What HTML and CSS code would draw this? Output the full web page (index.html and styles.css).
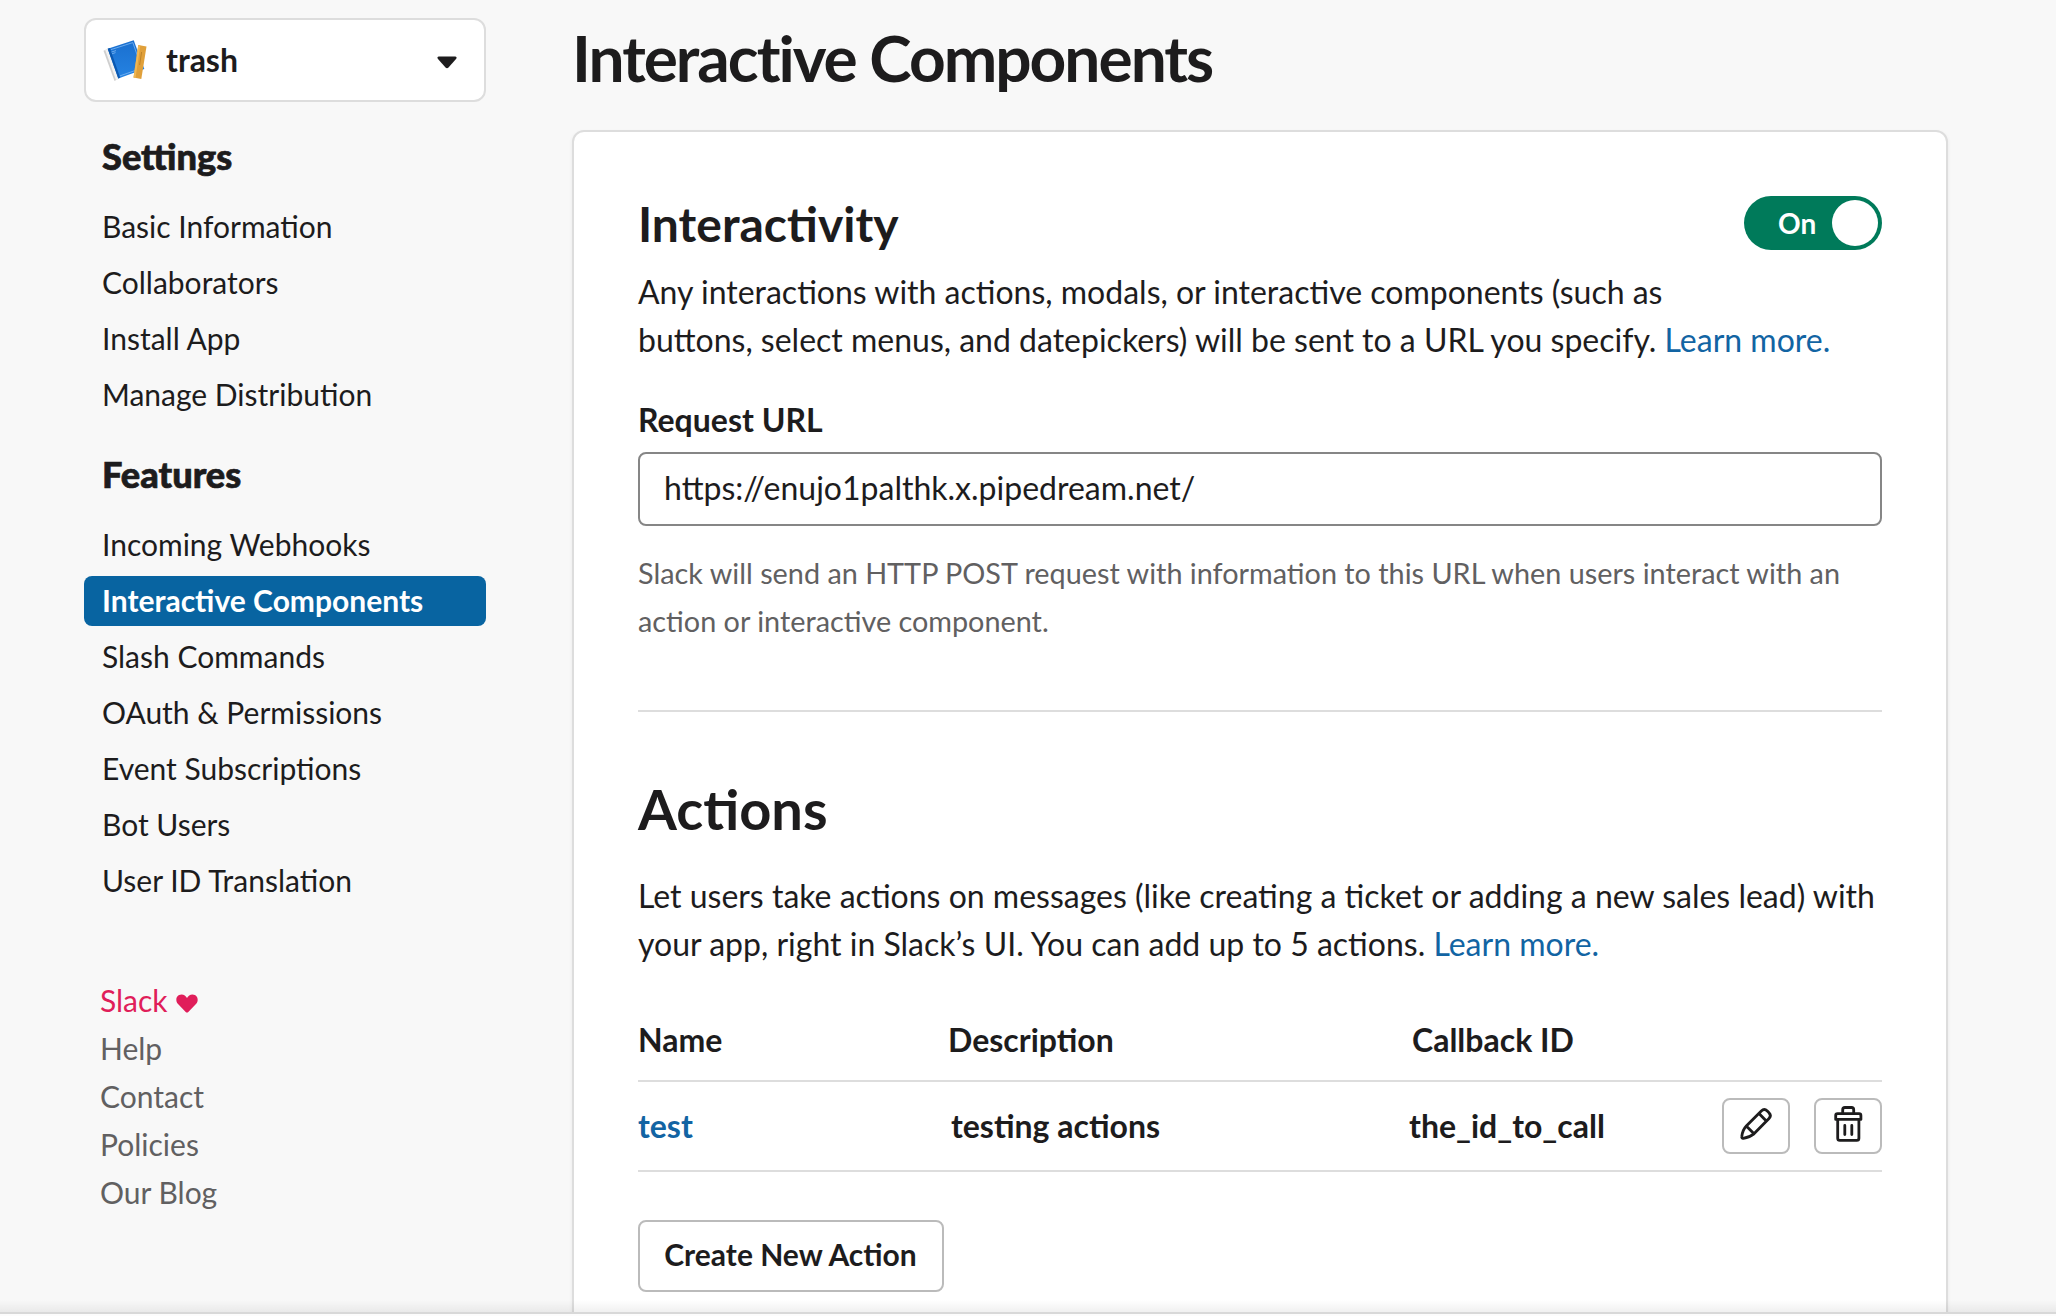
FILE: index.html
```html
<!DOCTYPE html>
<html lang="en">
<head>
<meta charset="utf-8">
<title>Interactive Components</title>
<link rel="stylesheet" href="styles.css">
</head>
<body>
<div class="page">
  <aside class="sidebar">
    <div class="app-picker">
      <svg class="app-icon" viewBox="0 0 44 44" width="44" height="44">
        <defs>
          <linearGradient id="cover" x1="0" y1="0" x2="0" y2="1"><stop offset="0" stop-color="#1a6fcf"/><stop offset="1" stop-color="#2583e2"/></linearGradient>
        </defs>
        <path d="M.5 12.800 5 10.700 15.500 40.700 11.500 43Z" fill="#cfcfcf"/>
        <path d="M2.200 12 5 10.700 15.500 40.700 13 42Z" fill="#f2f2f2"/>
        <path d="M4.700 10.700 30.700 2.300 41.300 31 15.300 40.500Z" fill="url(#cover)"/>
        <path d="M7.800 11.700 29.800 4.600 38.800 30.200 16.600 38" fill="none" stroke="#7db7f3" stroke-width=".8"/>
        <path d="M4.700 10.700 6.900 10 17.200 39.800 15.300 40.500Z" fill="#0b58b0"/>
        <path d="M8.500 14 13 12.600M9 15.800 12.500 14.600" stroke="#8cc0f5" stroke-width=".7"/>
        <path d="M35.300 7 43.500 8.500 38.300 41 30.500 39.500Z" fill="#e0a03a"/>
        <path d="M35.300 7 37.300 7.400 32.500 39.900 30.500 39.500Z" fill="#efb755"/>
        <path d="M38.600 14 36.600 27" stroke="#b27a24" stroke-width=".8"/>
      </svg>
      <span class="app-name">trash</span>
      <svg class="caret" viewBox="0 0 20 13" width="20" height="13"><path d="M1.600 0.500H18.400Q20.500 1.200 19 3L11.500 11.500Q10 13 8.500 11.500L1 3Q-.5 1.200 1.600 .5Z" fill="#1d1c1d"/></svg>
    </div>
    <h4 class="nav-title">Settings</h4>
    <nav class="nav">
      <a class="nav-item">Basic Information</a>
      <a class="nav-item">Collaborators</a>
      <a class="nav-item">Install App</a>
      <a class="nav-item">Manage Distribution</a>
    </nav>
    <h4 class="nav-title">Features</h4>
    <nav class="nav">
      <a class="nav-item">Incoming Webhooks</a>
      <a class="nav-item active">Interactive Components</a>
      <a class="nav-item">Slash Commands</a>
      <a class="nav-item">OAuth &amp; Permissions</a>
      <a class="nav-item">Event Subscriptions</a>
      <a class="nav-item">Bot Users</a>
      <a class="nav-item">User ID Translation</a>
    </nav>
    <div class="links">
      <a class="link-love">Slack <svg class="heart" viewBox="0 0 22 19" width="22" height="19"><path d="M11 18.500Q10.300 18.500 9.700 17.900L1.800 9.800C-.8 6.800-.2 0.500 5.500.4 8 .4 10 2 11 4 12 2 14 .4 16.500.4 22.200.5 22.800 6.800 20.200 9.800L12.300 17.900Q11.700 18.500 11 18.500Z" fill="#e01e5a"/></svg></a>
      <a>Help</a>
      <a>Contact</a>
      <a>Policies</a>
      <a>Our Blog</a>
    </div>
  </aside>
  <main class="main">
    <h1 class="page-title">Interactive Components</h1>
    <section class="card">
      <div class="card-head">
        <h2 class="section-title">Interactivity</h2>
        <div class="toggle"><span class="toggle-label">On</span><span class="knob"></span></div>
      </div>
      <p class="text">Any interactions with actions, modals, or interactive components (such as<br>buttons, select menus, and datepickers) will be sent to a URL you specify. <a class="more">Learn more.</a></p>
      <div class="label">Request URL</div>
      <div class="input">https://enujo1palthk.x.pipedream.net/</div>
      <p class="hint">Slack will send an HTTP POST request with information to this URL when users interact with an<br>action or interactive component.</p>
      <hr class="divider">
      <h2 class="actions-title">Actions</h2>
      <p class="text">Let users take actions on messages (like creating a ticket or adding a new sales lead) with<br>your app, right in Slack’s UI. You can add up to 5 actions. <a class="more">Learn more.</a></p>
      <div class="row row-head"><span>Name</span><span>Description</span><span>Callback ID</span></div>
      <div class="row row-body">
        <a class="more">test</a><span class="cell-desc">testing actions</span><span class="cell-id">the_id_to_call</span>
        <div class="tools">
          <span class="tool"><svg viewBox="0 0 68 56" width="68" height="56" fill="none" stroke="#1d1c1d" stroke-width="2.800" stroke-linejoin="round" stroke-linecap="round"><path d="M19.800 38.500Q20.500 32 24.300 28L39.300 13Q42.300 10 45.300 13L47 14.700Q49.800 17.600 47 20.500L32 35.800Q28 39 21.300 40.300 19.500 40.500 19.800 38.500ZM37 15.500 44.300 23M24.300 28 32 35.800"/></svg></span>
          <span class="tool"><svg viewBox="0 0 68 56" width="68" height="56" fill="none" stroke="#1d1c1d" stroke-width="2.800" stroke-linejoin="round" stroke-linecap="round"><path d="M28.700 15.500V11.700Q28.700 9.500 30.900 9.500H37.500Q39.700 9.500 39.700 11.700V15.500M21.700 21.400V17.400Q21.700 15.600 23.500 15.600H45.100Q46.900 15.600 46.900 17.400V21.400ZM23.700 21.400H44.900V40.200Q44.900 42.300 42.800 42.300H25.800Q23.700 42.300 23.700 40.200ZM30.800 27.400V36.600M37.800 27.400V36.600"/></svg></span>
        </div>
      </div>
      <button class="create">Create New Action</button>
    </section>
  </main>
  <div class="bottom-edge"></div>
</div>
</body>
</html>
```
FILE: styles.css
```css
* { box-sizing: border-box; }
html, body { margin: 0; height: 100%; overflow: hidden; }
body {
  font-family: Lato, "Liberation Sans", sans-serif;
  font-size: 32px;
  line-height: 48px;
  color: #1d1c1d;
  background: #f8f8f8;
}
h1, h2, h4, p { margin: 0; }
.page {
  position: relative;
  display: flex;
  width: 2056px;
  height: 1316px;
  padding: 0 108px 0 84px;
  gap: 86px;
  overflow: hidden;
}
.sidebar { width: 402px; padding-top: 18px; flex: none; }
.app-picker {
  display: flex;
  align-items: center;
  height: 84px;
  padding: 0 27px 0 17px;
  border: 2px solid #ddd;
  border-radius: 12px;
  background: #fff;
}
.app-name { flex: 1; margin-left: 19px; font-size: 32px; font-weight: 700; }
.caret { margin-top: 5px; }
.nav-title {
  margin-top: 30px;
  padding-left: 18px;
  font-size: 36.2px;
  line-height: 48px;
  font-weight: 900;
  -webkit-text-stroke: .7px #1d1c1d;
}
.nav { display: flex; flex-direction: column; gap: 6px; margin-top: 22px; }
.nav + .nav-title { margin-top: 30px; }
.nav-item {
  height: 50px;
  padding-left: 18px;
  font-size: 30px;
  line-height: 48px;
  border-radius: 8px;
}
.active { color: #fff; background: #0864a1; font-weight: 700; }
.links {
  display: flex;
  flex-direction: column;
  margin-top: 70px;
  padding-left: 16px;
  font-size: 30px;
  color: #616061;
}
.link-love { color: #e01e5a; }
.heart { margin-left: 1px; vertical-align: -1px; }
.main { width: 1376px; flex: none; }
.page-title {
  height: 130px;
  padding-top: 18px;
  font-size: 64px;
  line-height: 80px;
  font-weight: 700;
  letter-spacing: -2px;
}
.card {
  height: 1300px;
  padding: 64px;
  border: 2px solid #ddd;
  border-radius: 12px;
  background: #fff;
  box-shadow: 0 2px 4px rgba(0, 0, 0, .06);
}
.card-head { display: flex; justify-content: space-between; height: 72px; }
.section-title { font-size: 48px; line-height: 56px; font-weight: 700; }
.toggle {
  display: flex;
  align-items: center;
  justify-content: space-between;
  width: 138px;
  height: 54px;
  padding: 0 4px 0 34px;
  border-radius: 27px;
  background: #007a5a;
  color: #fff;
}
.toggle-label { font-size: 28px; font-weight: 700; }
.knob { width: 46px; height: 46px; border-radius: 50%; background: #fff; }
.more { color: #1264a3; }
.label { margin-top: 32px; font-weight: 700; }
.input {
  height: 74px;
  margin-top: 8px;
  padding-left: 24px;
  border: 2px solid #868686;
  border-radius: 8px;
  line-height: 68px;
}
.hint { margin-top: 23px; font-size: 28.8px; color: #616061; }
.divider { height: 2px; margin: 65px 0 0; border: 0; background: #ddd; }
.actions-title { margin-top: 62px; font-size: 56px; line-height: 70px; font-weight: 700; }
.actions-title + .text { margin-top: 28px; }
.row {
  display: grid;
  grid-template-columns: 310px 464px 310px 1fr;
  align-items: center;
  border-bottom: 2px solid #ddd;
  font-weight: 700;
}
.row-head { height: 84px; margin-top: 30px; padding-top: 2px; }
.row-body { height: 90px; }
.cell-desc { padding-left: 3px; }
.cell-id { margin-left: -3px; }
.tools { display: flex; gap: 24px; }
.tool {
  display: flex;
  width: 68px;
  height: 56px;
  border: 2px solid #bbb;
  border-radius: 8px;
}
.tool svg { margin: -2px; flex: none; }
.create {
  width: 306px;
  height: 72px;
  margin-top: 48px;
  padding: 0 1px 4px 0;
  border: 2px solid #bbb;
  border-radius: 8px;
  background: #fff;
  color: inherit;
  font: 700 30px Lato, sans-serif;
}
.bottom-edge {
  position: absolute;
  left: 0;
  right: 0;
  bottom: 0;
  height: 16px;
  background: linear-gradient(rgba(0, 0, 0, 0) 0, rgba(0, 0, 0, .06) 12px, #d8d8d8 12px, #d8d8d8 14px, #fcfcfc 14px);
}
```
